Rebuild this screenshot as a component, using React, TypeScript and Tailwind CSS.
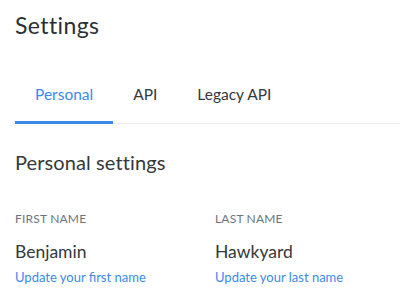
import React from 'react';

const tabs = ['Personal', 'API', 'Legacy API'];

function Field({ label, value, action }: { label: string; value: string; action: string }) {
  return (
    <div className="w-[200px] shrink-0">
      <div className="text-[12px] leading-[16px] uppercase tracking-[0.2px] text-[#6b757d]">{label}</div>
      <div className="mt-[15px] text-[17.5px] leading-[20px] text-[#33383c]">{value}</div>
      <a href="#" className="mt-[7px] block text-[13px] leading-[16px] text-[#3a8ae8]">
        {action}
      </a>
    </div>
  );
}

export default function App() {
  return (
    <div className="h-[300px] w-[400px] overflow-hidden bg-white pl-[15px] font-['Lato','Liberation_Sans',sans-serif]">
      <h1 className="pt-[12px] text-[23px] leading-[26px] tracking-[0.4px] text-[#2a2f33]">Settings</h1>

      {/* Tabs */}
      <div className="mt-[46px] flex border-b border-[#eceff1]">
        {tabs.map((t, i) => (
          <div
            key={t}
            className={`-mb-px px-5 pb-[17px] text-[15.5px] leading-[20px] ${
              i === 0 ? 'border-b-[3px] border-[#3a8ae8] text-[#3a8ae8]' : 'border-b-[3px] border-transparent text-[#33383c]'
            }`}
          >
            {t}
          </div>
        ))}
      </div>

      <h2 className="mt-[26px] text-[20px] leading-[24px] tracking-[0.1px] text-[#33383c]">Personal settings</h2>

      <div className="mt-[37px] flex">
        <Field label="First name" value="Benjamin" action="Update your first name" />
        <Field label="Last name" value="Hawkyard" action="Update your last name" />
      </div>
    </div>
  );
}
